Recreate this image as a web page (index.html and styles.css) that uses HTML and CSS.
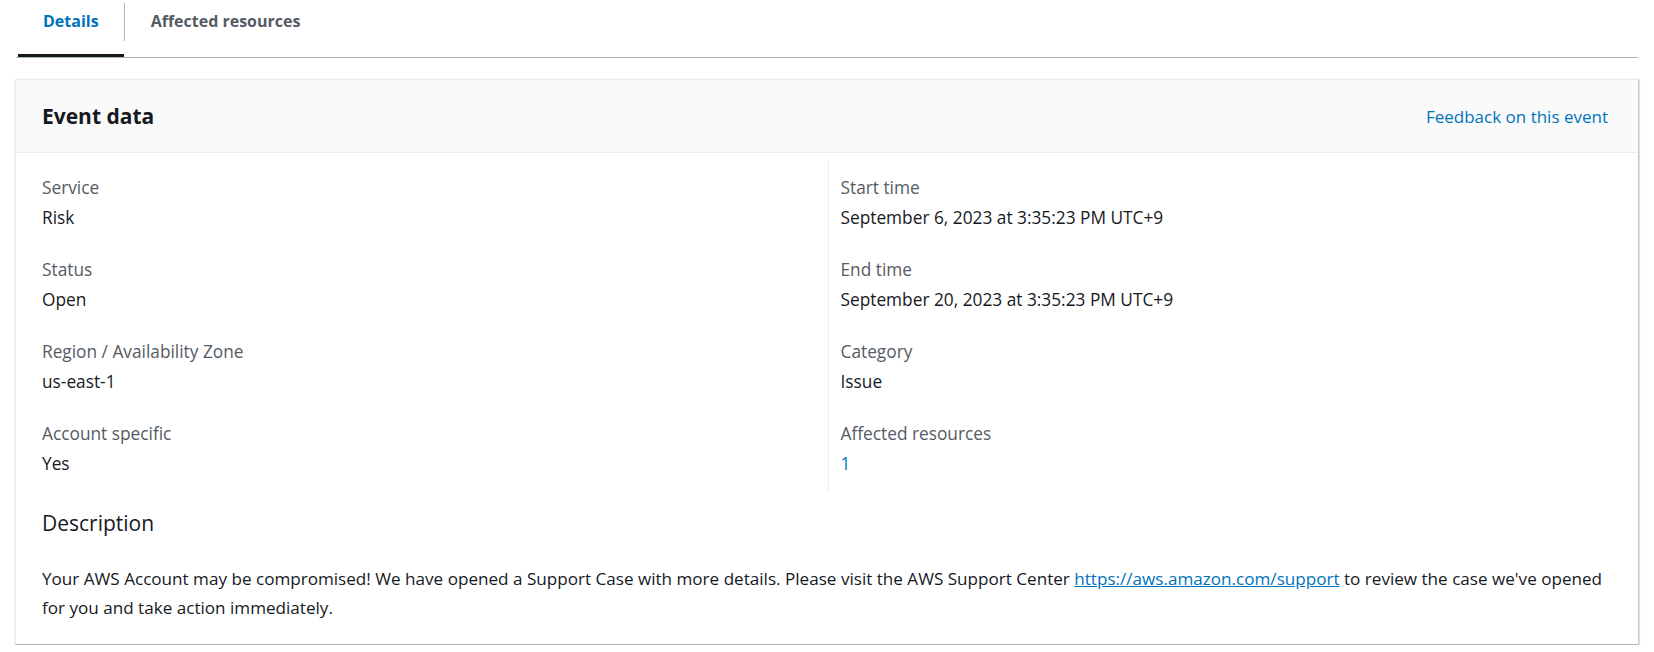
FILE: index.html
```html
<!DOCTYPE html>
<html lang="en">

<head>
    <meta charset="UTF-8">
    <meta name="viewport" content="width=device-width, initial-scale=1.0">
    <title>Event details</title>
    <link rel="stylesheet" href="styles.css">
</head>

<body>

    <!-- Tabs -->
    <div class="tabs">
        <a href="#" class="tab active">Details</a>
        <span class="tab-sep"></span>
        <a href="#" class="tab">Affected resources</a>
    </div>

    <!-- Event data card -->
    <div class="card">
        <div class="card-header">
            <h2>Event data</h2>
            <a href="#" class="feedback-link">Feedback on this event</a>
        </div>

        <div class="card-body">
            <div class="columns">
                <div class="column">
                    <div class="item">
                        <div class="label">Service</div>
                        <div class="value">Risk</div>
                    </div>
                    <div class="item">
                        <div class="label">Status</div>
                        <div class="value">Open</div>
                    </div>
                    <div class="item">
                        <div class="label">Region / Availability Zone</div>
                        <div class="value">us-east-1</div>
                    </div>
                    <div class="item">
                        <div class="label">Account specific</div>
                        <div class="value">Yes</div>
                    </div>
                </div>

                <div class="column">
                    <div class="item">
                        <div class="label">Start time</div>
                        <div class="value">September 6, 2023 at 3:35:23 PM UTC+9</div>
                    </div>
                    <div class="item">
                        <div class="label">End time</div>
                        <div class="value">September 20, 2023 at 3:35:23 PM UTC+9</div>
                    </div>
                    <div class="item">
                        <div class="label">Category</div>
                        <div class="value">Issue</div>
                    </div>
                    <div class="item">
                        <div class="label">Affected resources</div>
                        <div class="value"><a href="#" class="plain-link">1</a></div>
                    </div>
                </div>
            </div>

            <h3>Description</h3>
            <p class="description">Your AWS Account may be compromised! We have opened a Support Case with more details. Please visit the AWS Support Center <a href="#" class="inline-link">https://aws.amazon.com/support</a> to review the case we've opened for you and take action immediately.</p>
        </div>
    </div>

</body>

</html>
```

FILE: styles.css
```css
* {
    margin: 0;
    padding: 0;
    box-sizing: border-box;
}

body {
    font-family: "Open Sans", Arial, sans-serif;
    font-size: 17.3px;
    color: #16191f;
    background-color: #fff;
    padding: 0 15px;
}

a {
    text-decoration: none;
}

/* Tabs row */
.tabs {
    display: flex;
    height: 58px;
    margin: 0 1px;
    padding-left: 2px;
    border-bottom: 1px solid #aab7b8;
}

.tab {
    font-size: 16px;
    font-weight: bold;
    line-height: 26px;
    padding: 8px 25px 0 25px;
    color: #545b64;
    border-bottom: 3px solid transparent;
}

.tab + .tab-sep + .tab {
    padding-left: 26px;
}

.tab.active {
    color: #0073bb;
    border-bottom-color: #16191f;
}

.tab-sep {
    width: 1px;
    height: 38px;
    margin-top: 3px;
    background-color: #aab7b8;
}

/* Card */
.card {
    margin-top: 21px;
    background-color: #fff;
    border: 1px solid #eaeded;
    border-right-color: #c6cdce;
    border-bottom-color: #aab7b8;
    box-shadow: 0 1px 1px 0 rgba(0, 28, 36, 0.25), 1px 0 1px 0 rgba(0, 28, 36, 0.1);
}

.card-header {
    display: flex;
    justify-content: space-between;
    align-items: center;
    padding: 21px 30px 21px 26px;
    background-color: #fafafa;
    border-bottom: 1px solid #eaeded;
}

.card-header h2 {
    font-size: 21px;
    line-height: 30px;
    font-weight: bold;
}

.feedback-link {
    color: #0073bb;
    font-size: 17px;
}

.card-body {
    padding: 7px 25px 22px 26px;
}

.columns {
    display: grid;
    grid-template-columns: 1fr 1fr;
}

.column {
    display: flex;
    flex-direction: column;
    gap: 26px;
    padding: 15px 0 14px 0;
}

.column + .column {
    border-left: 1px solid #eaeded;
    padding-left: 12px;
}

.label {
    color: #545b64;
    line-height: 26px;
}

.value {
    line-height: 26px;
    margin-top: 4px;
}

.plain-link {
    color: #0073bb;
}

h3 {
    font-size: 21px;
    font-weight: normal;
    line-height: 30px;
    margin-top: 17px;
}

.description {
    margin-top: 26px;
    font-size: 17.1px;
    line-height: 29px;
}

.inline-link {
    color: #0073bb;
    text-decoration: underline;
}
```
